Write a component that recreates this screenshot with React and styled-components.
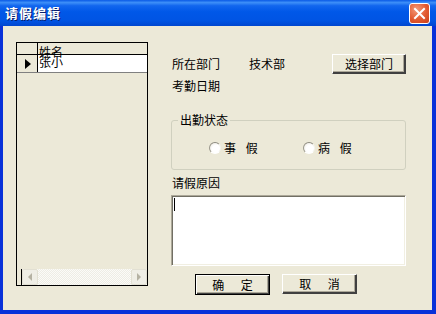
import React from 'react';
import styled, { createGlobalStyle } from 'styled-components';

const GlobalStyle = createGlobalStyle`
  html, body { margin: 0; padding: 0; background: #fff; }
  body { font-family: "Noto Sans CJK SC", "Liberation Sans", sans-serif; font-size: 12px; }
  * { box-sizing: border-box; }
`;

const Window = styled.div`
  width: 436px;
  height: 314px;
  display: flex;
  flex-direction: column;
  background: #0831d9;
`;

const TitleBar = styled.div`
  height: 26px;
  flex: none;
  display: flex;
  align-items: center;
  justify-content: space-between;
  padding: 0 6px 0 5px;
  background: linear-gradient(to bottom, #0a5ae6 0%, #3d8ff8 10%, #1266ee 22%, #0058e8 45%, #0054e3 80%, #0147cf 100%);
`;

const Title = styled.span`
  color: #fff;
  font-weight: bold;
  font-size: 13px;
  letter-spacing: 1px;
  line-height: 14px;
  text-shadow: 1px 1px #0a1e6a;
`;

const CloseButton = styled.div`
  width: 21px;
  height: 21px;
  border: 1px solid #fff;
  border-radius: 3px;
  background: radial-gradient(circle at 35% 30%, #f39a7a 0%, #e2592f 55%, #c8401b 100%);
  display: flex;
  align-items: center;
  justify-content: center;
`;

const Body = styled.div`
  flex: 1;
  margin: 0 4px 4px 3px;
  background: #ece9d8;
  display: flex;
  padding: 16px 0 0 13px;
  gap: 23px;
`;

const Grid = styled.div`
  width: 132px;
  height: 244px;
  border: 1px solid #000;
  display: flex;
  flex-direction: column;
  background: #ece9d8;
`;

const GridRow = styled.div`
  display: flex;
  height: ${p => p.$h}px;
  border-bottom: 1px solid ${p => p.$line};
  position: relative;
  z-index: ${p => p.$z || 0};
`;

const Indicator = styled.div`
  width: 21px;
  flex: none;
  border-right: 1px solid #000;
  display: flex;
  align-items: center;
  justify-content: center;
  background: #ece9d8;
`;

const Cell = styled.div`
  flex: 1;
  background: ${p => p.$bg};
  padding-left: 1px;
  line-height: 14px;
  font-size: 12px;
  color: #000;
  white-space: nowrap;
  overflow: visible;
  padding-top: ${p => p.$top || 0}px;
`;

const Arrow = styled.div`
  width: 0;
  height: 0;
  border-top: 5px solid transparent;
  border-bottom: 5px solid transparent;
  border-left: 6px solid #000;
  margin-left: 1px;
`;

const GridSpace = styled.div`
  flex: 1;
`;

const HScroll = styled.div`
  height: 16px;
  margin: 0 0 0 4px;
  border-left: 1px solid #000;
  display: flex;
  background-color: #f5f4ee;
  background-image: repeating-conic-gradient(#fbfbf8 0% 25%, #eeede5 0% 50%);
  background-size: 2px 2px;
`;

const ScrollBtn = styled.div`
  width: 16px;
  flex: none;
  background: #efeee6;
  border: 1px solid #e2e0d3;
  border-radius: 2px;
  display: flex;
  align-items: center;
  justify-content: center;
`;

const ScrollArrow = styled.div`
  width: 0;
  height: 0;
  border-top: 4px solid transparent;
  border-bottom: 4px solid transparent;
  ${p => (p.$dir === 'left' ? 'border-right: 4px solid #b5b2a3;' : 'border-left: 4px solid #b5b2a3;')}
`;

const Form = styled.div`
  width: 236px;
  display: flex;
  flex-direction: column;
  padding-top: 12px;
`;

const Row = styled.div`
  display: flex;
  align-items: center;
  height: ${p => p.$h}px;
  margin-top: ${p => p.$mt || 0}px;
`;

const Label = styled.span`
  width: ${p => p.$w || 'auto'};
  padding-left: 1px;
  font-size: 12px;
  line-height: 14px;
  color: #000;
  white-space: nowrap;
`;

const Button = styled.div`
  width: ${p => p.$w}px;
  height: ${p => p.$h}px;
  margin-left: ${p => p.$ml || 0}px;
  flex: none;
  display: flex;
  align-items: center;
  justify-content: center;
  background: #ece9d8;
  border: 1px solid ${p => (p.$default ? '#000' : '#fff')};
  box-shadow: ${p =>
    p.$default
      ? 'inset 1px 1px #fff, inset -1px -1px #404040, inset -2px -2px #aca899'
      : 'inset -1px -1px #404040, inset -2px -2px #aca899'};
  border-right-color: ${p => (p.$default ? '#000' : '#404040')};
  border-bottom-color: ${p => (p.$default ? '#000' : '#404040')};
  font-size: 12px;
  line-height: 14px;
  color: #000;
  word-spacing: ${p => p.$ws || 0}px;
  white-space: pre;
`;

const GroupBox = styled.fieldset`
  margin: 20px 0 0 0;
  padding: 0;
  width: 235px;
  border: 1px solid #d0d0bf;
  border-radius: 3px;
`;

const Legend = styled.legend`
  margin-left: 6px;
  padding: 0 2px;
  font-size: 12px;
  line-height: 14px;
  color: #000;
`;

const RadioRow = styled.div`
  height: 42px;
  display: flex;
  align-items: center;
  padding-left: 37px;
`;

const RadioItem = styled.label`
  width: 94px;
  display: flex;
  align-items: center;
  gap: 3px;
  font-size: 12px;
  line-height: 14px;
  word-spacing: 7px;
  color: #000;
`;

const RadioDot = styled.span`
  width: 12px;
  height: 12px;
  border-radius: 50%;
  background: radial-gradient(circle at 60% 60%, #fff 0%, #fff 45%, #e6e3d6 100%);
  border: 1px solid;
  border-color: #8d8b80 #f4f3ee #fff #9a988c;
`;

const TextBox = styled.div`
  width: 235px;
  height: 71px;
  margin-top: 5px;
  background: #fff;
  border: 1px solid;
  border-color: #aca899 #fff #fff #aca899;
  box-shadow: inset 1px 1px #716f64, inset -1px -1px #f1efe2;
  padding: 2px 0 0 2px;
`;

const Caret = styled.span`
  display: block;
  width: 1px;
  height: 13px;
  background: #000;
`;

const ButtonRow = styled.div`
  display: flex;
  margin-top: 8px;
  padding-left: 24px;
`;

function App() {
  return (
    <>
      <GlobalStyle />
      <Window>
        <TitleBar>
          <Title>请假编辑</Title>
          <CloseButton>
            <svg width="13" height="13" viewBox="0 0 13 13">
              <path d="M2 2 L11 11 M11 2 L2 11" stroke="#fff" strokeWidth="2" strokeLinecap="square" />
            </svg>
          </CloseButton>
        </TitleBar>
        <Body>
          <Grid>
            <GridRow $h={12} $line="#000" $z={2}>
              <Indicator />
              <Cell $bg="transparent" $top={2}>姓名</Cell>
            </GridRow>
            <GridRow $h={18} $line="#808080" $z={1}>
              <Indicator>
                <Arrow />
              </Indicator>
              <Cell $bg="#fff" $top={0}>张小</Cell>
            </GridRow>
            <GridSpace />
            <HScroll>
              <ScrollBtn>
                <ScrollArrow $dir="left" />
              </ScrollBtn>
              <GridSpace />
              <ScrollBtn>
                <ScrollArrow $dir="right" />
              </ScrollBtn>
            </HScroll>
          </Grid>
          <Form>
            <Row $h={20}>
              <Label $w="77px">所在部门</Label>
              <Label $w="84px">技术部</Label>
              <Button $w={74} $h={20}>选择部门</Button>
            </Row>
            <Row $h={14} $mt={5}>
              <Label>考勤日期</Label>
            </Row>
            <GroupBox>
              <Legend>出勤状态</Legend>
              <RadioRow>
                <RadioItem>
                  <RadioDot />
                  事 假
                </RadioItem>
                <RadioItem>
                  <RadioDot />
                  病 假
                </RadioItem>
              </RadioRow>
            </GroupBox>
            <Row $h={14} $mt={6}>
              <Label>请假原因</Label>
            </Row>
            <TextBox>
              <Caret />
            </TextBox>
            <ButtonRow>
              <Button $w={75} $h={21} $default $ws={14}>确 定</Button>
              <Button $w={75} $h={20} $ml={12} $ws={14}>取 消</Button>
            </ButtonRow>
          </Form>
        </Body>
      </Window>
    </>
  );
}

export default App;
